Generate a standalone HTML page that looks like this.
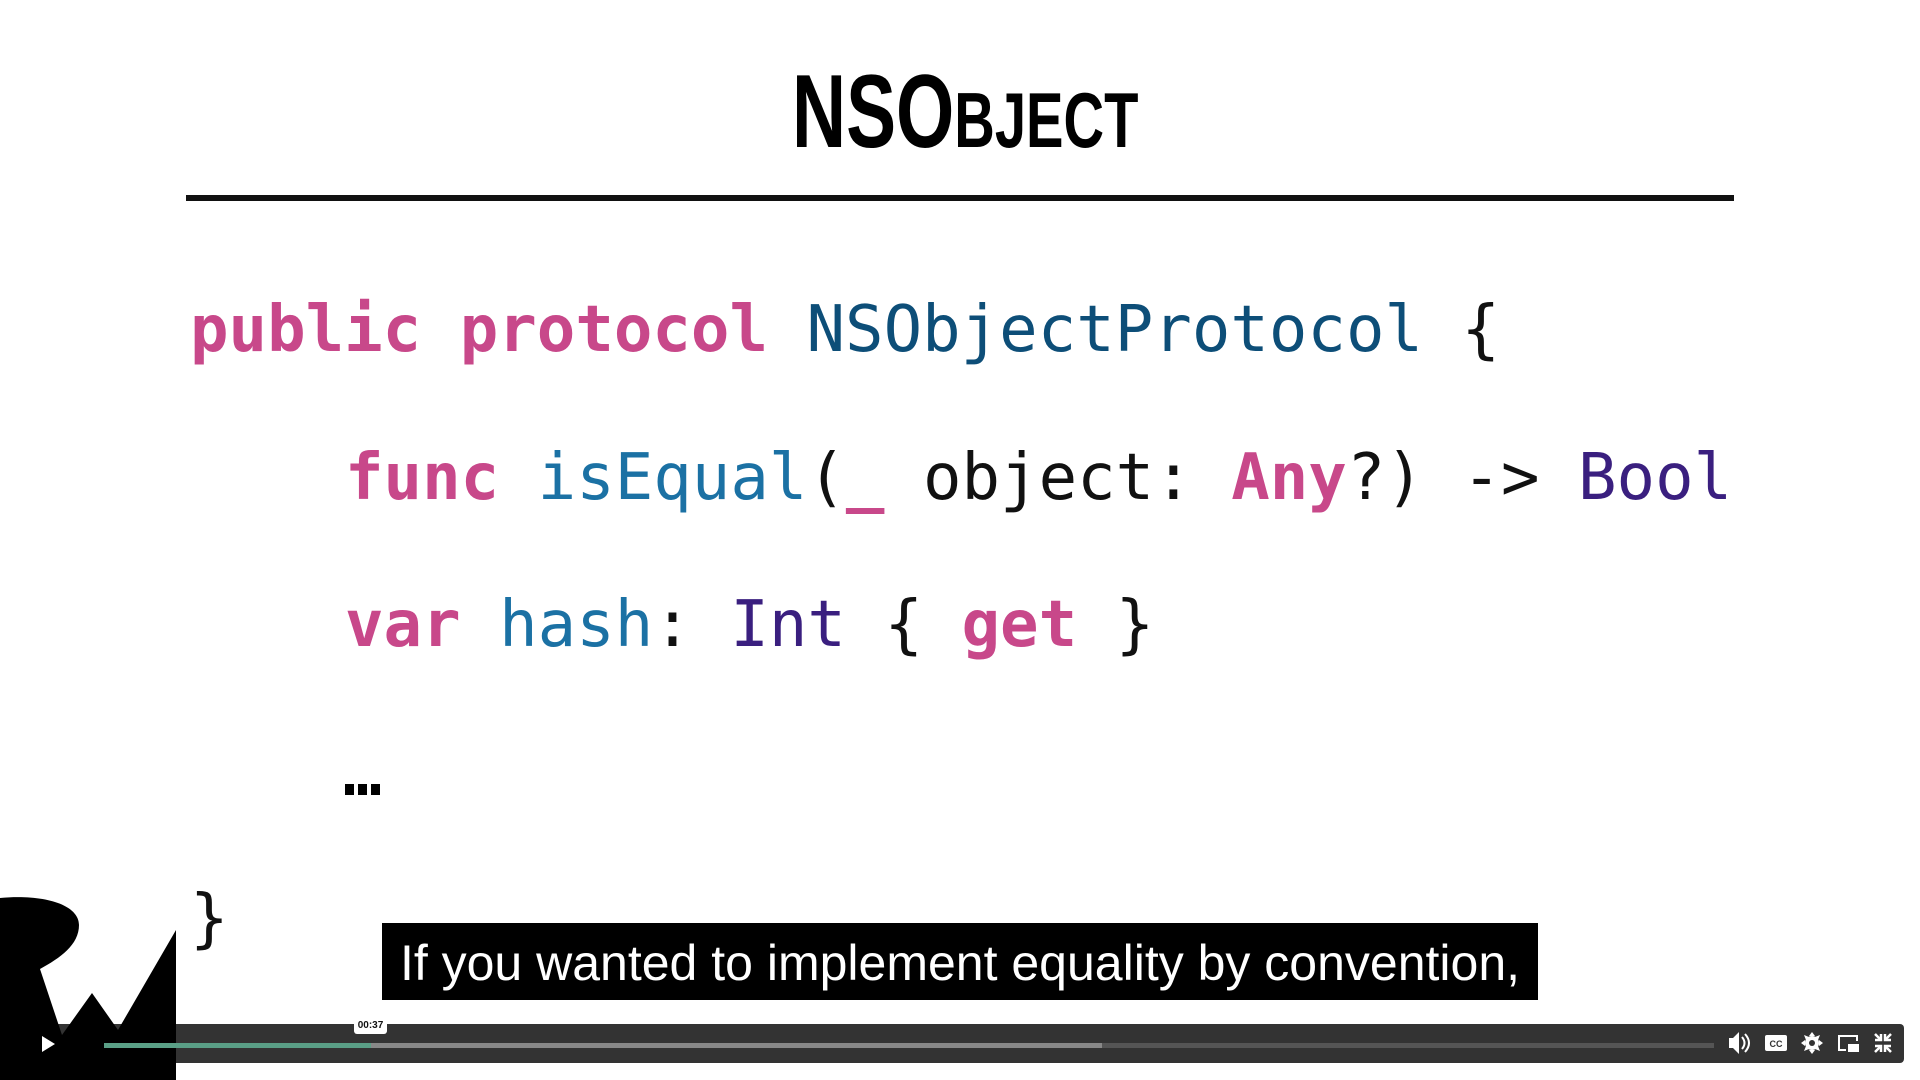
<!DOCTYPE html>
<html><head><meta charset="utf-8"><style>
html,body{margin:0;padding:0;background:#fff;width:1920px;height:1080px;overflow:hidden;position:relative;font-family:"Liberation Sans",sans-serif}
.t{position:absolute;left:792px;top:60px;font-family:"Liberation Sans",sans-serif;font-weight:bold;color:#000;white-space:nowrap;line-height:1;transform-origin:0 0;transform:scaleX(0.72)}
.t .b{font-size:104px}.t .s{font-size:78px}
.rule{position:absolute;left:186px;top:195px;width:1548px;height:6px;background:#111}
.code{position:absolute;font-family:"DejaVu Sans Mono","Liberation Mono",monospace;font-size:64px;white-space:pre;line-height:1;color:#111}
.k{color:#c8488a;font-weight:bold}.ty{color:#0d4e78}.fn{color:#1b71a4}.pu{color:#3a1f7f}
.sub{position:absolute;left:382px;top:923px;width:1156px;height:77px;background:#000;color:#fff;font-size:50px;line-height:80px;text-align:center;white-space:nowrap}
.bar{position:absolute;left:0;top:1024px;width:1904px;height:39px;background:#333;border-radius:0 4px 4px 0}
.trk{position:absolute;left:104px;top:1043px;height:5px}
</style></head><body>
<div class="t"><span class="b">NSO</span><span class="s">BJECT</span></div>
<div class="rule"></div>
<div class="code" style="left:190px;top:298px"><span class="k">public protocol</span> <span class="ty">NSObjectProtocol</span> {</div>
<div class="code" style="left:345px;top:446px"><span class="k">func</span> <span class="fn">isEqual</span>(<span class="k">_</span> object: <span class="k">Any</span>?) -&gt; <span class="pu">Bool</span></div>
<div class="code" style="left:345px;top:593px"><span class="k">var</span> <span class="fn">hash</span>: <span class="pu">Int</span> { <span class="k">get</span> }</div>
<div style="position:absolute;left:345px;top:784px;width:35px;height:11px;background:repeating-linear-gradient(90deg,#000 0 9px,transparent 9px 13px)"></div>
<div class="code" style="left:190px;top:887px">}</div>
<div class="sub">If you wanted to implement equality by convention,</div>
<div class="bar"></div>
<svg style="position:absolute;left:0;top:0" width="1920" height="1080">
<path d="M0,898 C45,894 79,905 79,925 C79,945 60,958 40,969 L62,1035 L92,993 L118,1030 L176,930 L176,1080 L0,1080 Z" fill="#000"/>
<path d="M42,1036 L55,1044 L42,1052 Z" fill="#fff"/>
<g fill="#fff">
<path d="M1729,1038 h4 l6,-6 v22 l-6,-6 h-4 Z"/>
<path d="M1742,1037 q5,6 0,12" stroke="#fff" stroke-width="2" fill="none"/>
<path d="M1745,1034 q8,9 0,18" stroke="#fff" stroke-width="2" fill="none"/>
<rect x="1765" y="1035" width="22" height="16" rx="2"/>
<circle cx="1812" cy="1043" r="7"/>
<path d="M1812,1032 l3,4 h-6 Z M1812,1054 l3,-4 h-6Z M1801,1043 l4,-3 v6Z M1823,1043 l-4,-3 v6Z M1804,1035 l5,2 -3,3Z M1820,1035 l-5,2 3,3Z M1804,1051 l5,-2 -3,-3Z M1820,1051 l-5,-2 3,-3Z"/>
<path d="M1838,1035 h20 v6 h-2 v-4 h-16 v12 h6 v2 h-8 Z"/><rect x="1848" y="1044" width="11" height="8"/>
<path d="M1875,1034 l5,5 M1891,1034 l-5,5 M1875,1052 l5,-5 M1891,1052 l-5,-5" stroke="#fff" stroke-width="2.5"/>
<path d="M1881,1034 v6 h-6 M1885,1034 v6 h6 M1881,1052 v-6 h-6 M1885,1052 v-6 h6" stroke="#fff" stroke-width="2.5" fill="none"/>
</g>
<text x="1776" y="1047" font-size="9" font-weight="bold" fill="#333" text-anchor="middle" font-family="Liberation Sans">CC</text>
<circle cx="1812" cy="1043" r="3" fill="#333"/>
</svg>
<div class="trk" style="width:1610px;background:#555"></div>
<div class="trk" style="width:998px;background:#888"></div>
<div class="trk" style="width:267px;background:#5a9f86"></div>
<div style="position:absolute;left:354px;top:1017px;width:33px;height:17px;background:#fff;border-radius:3px;font-size:10px;font-weight:bold;text-align:center;line-height:17px;color:#111">00:37</div>
</body></html>
